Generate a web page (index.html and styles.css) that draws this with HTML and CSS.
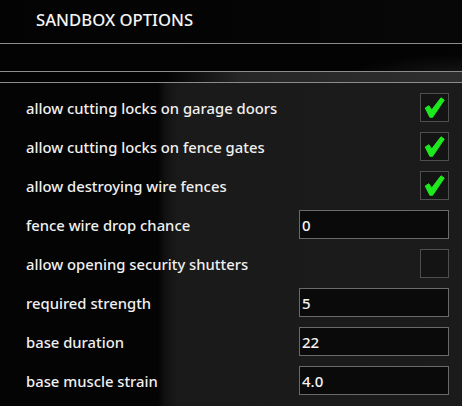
FILE: index.html
```html
<!DOCTYPE html>
<html>
<head>
<meta charset="utf-8">
<link rel="stylesheet" href="styles.css">
</head>
<body>
<div class="screen">
  <div class="header"><h1 class="title">SANDBOX OPTIONS</h1></div>
  <div class="gap-top"></div>
  <div class="band"></div>
  <div class="list">
    <div class="row"><span class="label">allow cutting locks on garage doors</span><span class="check on"><svg viewBox="0 0 29 29" width="28" height="28"><path d="M4.5 14.5 L8.5 12 L11.5 16.5 L21.5 3.5 L25 6 L12.5 24.5 L9.5 24.5 Z" fill="#1ee81e" stroke="#1ee81e" stroke-width="1" stroke-linejoin="round"/></svg></span></div>
    <div class="row"><span class="label">allow cutting locks on fence gates</span><span class="check on"><svg viewBox="0 0 29 29" width="28" height="28"><path d="M4.5 14.5 L8.5 12 L11.5 16.5 L21.5 3.5 L25 6 L12.5 24.5 L9.5 24.5 Z" fill="#1ee81e" stroke="#1ee81e" stroke-width="1" stroke-linejoin="round"/></svg></span></div>
    <div class="row"><span class="label">allow destroying wire fences</span><span class="check on"><svg viewBox="0 0 29 29" width="28" height="28"><path d="M4.5 14.5 L8.5 12 L11.5 16.5 L21.5 3.5 L25 6 L12.5 24.5 L9.5 24.5 Z" fill="#1ee81e" stroke="#1ee81e" stroke-width="1" stroke-linejoin="round"/></svg></span></div>
    <div class="row"><span class="label">fence wire drop chance</span><span class="field">0</span></div>
    <div class="row"><span class="label">allow opening security shutters</span><span class="check"></span></div>
    <div class="row"><span class="label">required strength</span><span class="field">5</span></div>
    <div class="row"><span class="label">base duration</span><span class="field">22</span></div>
    <div class="row"><span class="label">base muscle strain</span><span class="field">4.0</span></div>
  </div>
</div>
</body>
</html>
```

FILE: styles.css
```css
html, body {
  margin: 0;
  padding: 0;
  background: #030303;
}
.screen {
  width: 462px;
  height: 406px;
  overflow: hidden;
  font-family: "Noto Sans", "Open Sans", sans-serif;
  color: #f2f2f2;
  background: #030303;
}
.header {
  height: 44px;
  border-bottom: 1px solid #8c8c8c;
  box-sizing: border-box;
  padding-left: 36px;
  background: linear-gradient(to right, #030303 0, #050505 60%, #070707 100%);
}
.title {
  margin: 0;
  font-size: 16.7px;
  font-weight: 500;
  line-height: 40px;
  letter-spacing: 0;
  color: #f4f4f4;
}
.gap-top {
  height: 27px;
  border-bottom: 1px solid #8c8c8c;
  background: radial-gradient(ellipse 120px 20px at 470px 30px, #161616 0, rgba(10,10,10,0) 100%), #030303;
}
.band {
  height: 10px;
  border-bottom: 1px solid #8c8c8c;
  background: linear-gradient(100deg, #030303 0, #030303 36%, #262626 52%, #2a2a2a 75%, #2e2e2e 100%);
}
.list {
  padding: 5px 13px 0 26px;
  height: 322px;
  background: linear-gradient(to right, #040404 0, #040404 158px, #121212 166px, #1a1a1a 178px, #1b1b1b 100%);
}
.row {
  height: 39px;
  display: flex;
  align-items: center;
  justify-content: space-between;
}
.label {
  font-size: 14.8px;
  font-weight: 500;
  color: #f0f0f0;
}
.check {
  width: 29px;
  height: 29px;
  box-sizing: border-box;
  border: 1px solid #4e4e4e;
  background: #141414;
  display: flex;
  align-items: center;
  justify-content: center;
}
.check svg { display: block; }
.field {
  width: 150px;
  height: 29px;
  box-sizing: border-box;
  border: 1px solid #6a6a6a;
  background: #0a0a0a;
  font-size: 15px;
  font-weight: 500;
  line-height: 28px;
  padding-left: 2px;
  color: #f4f4f4;
}
```
